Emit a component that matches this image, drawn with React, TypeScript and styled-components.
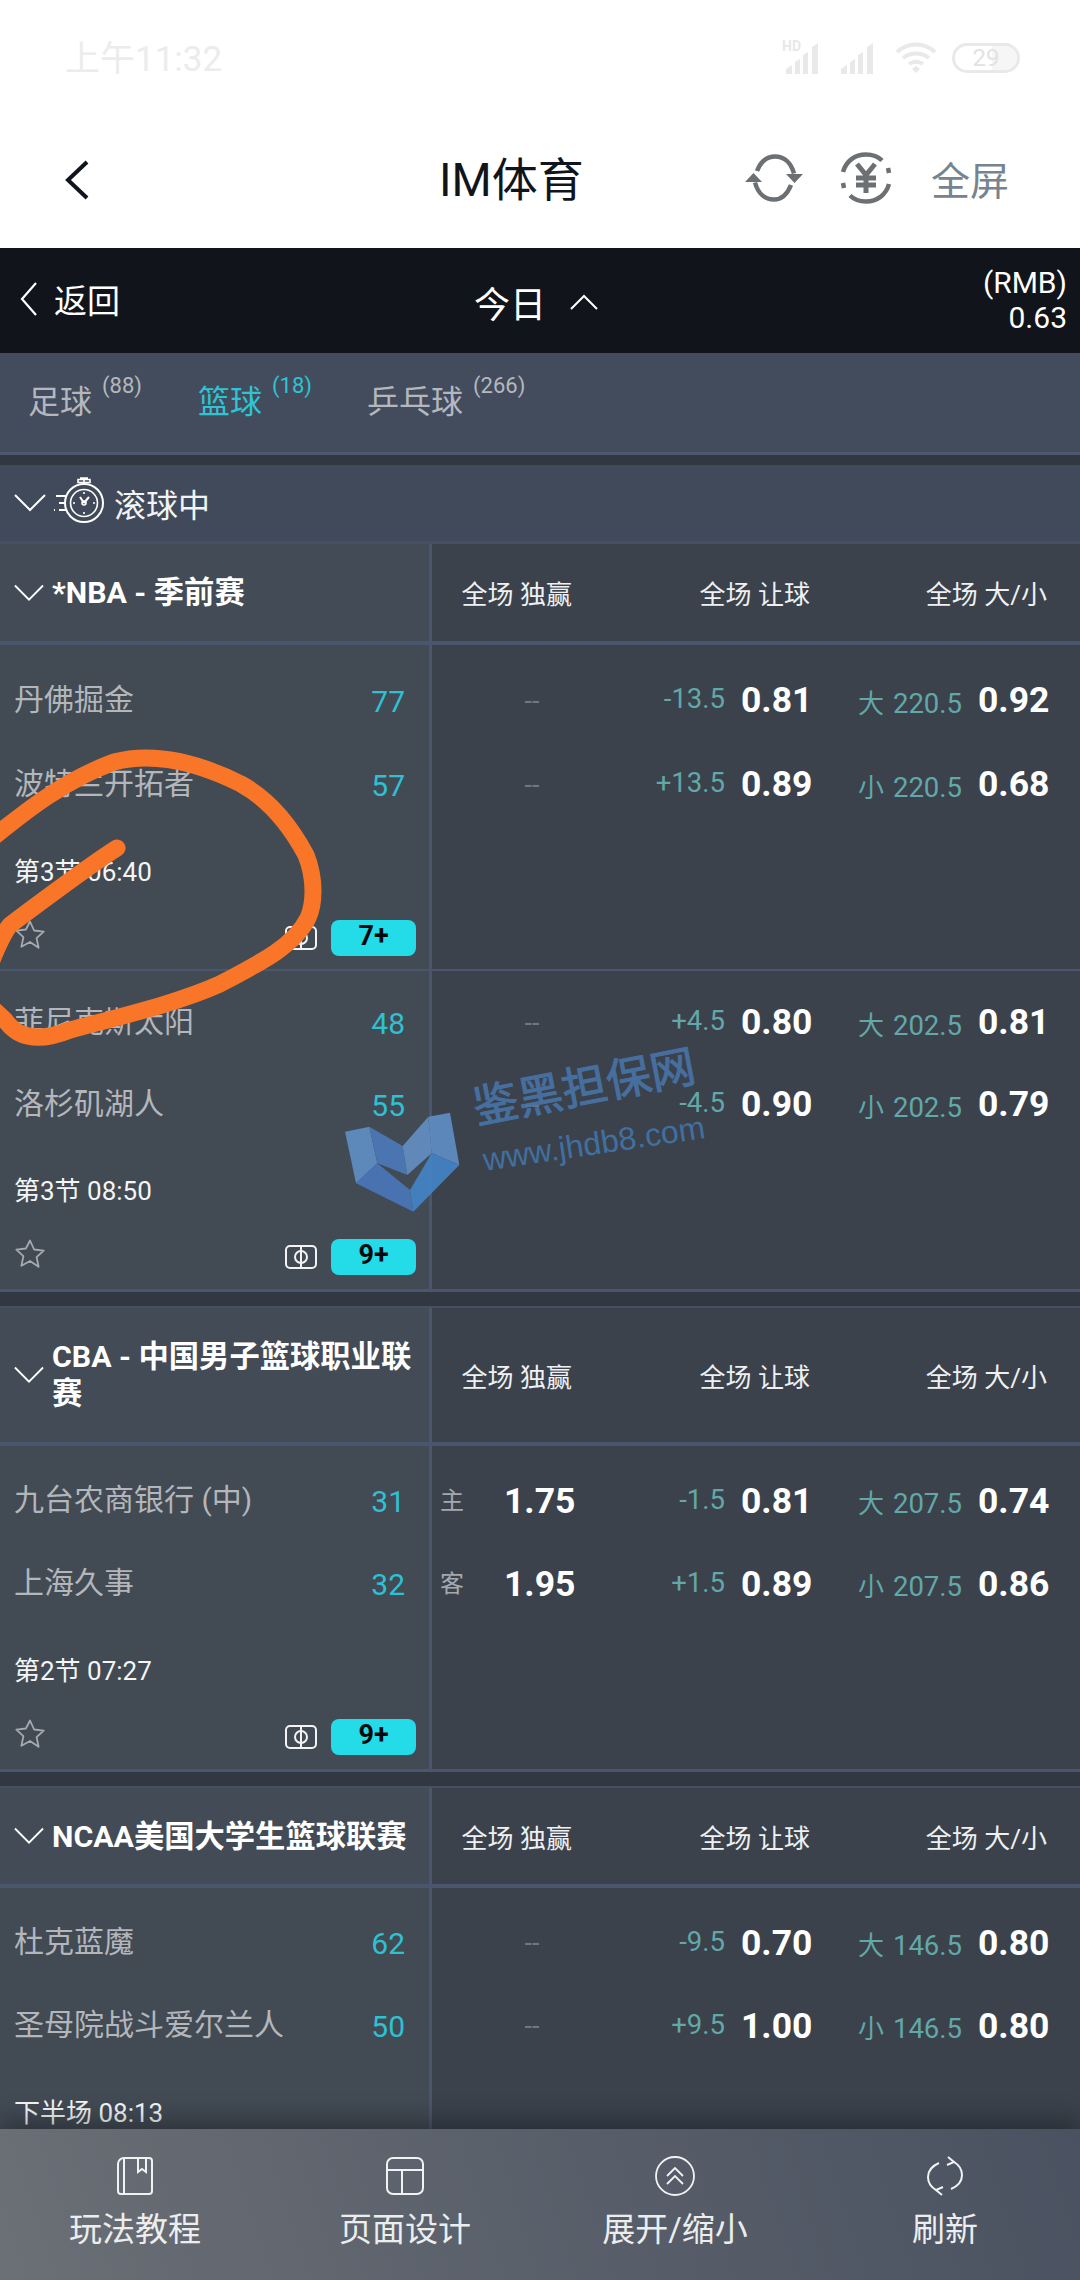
import React from "react";
import styled, { createGlobalStyle } from "styled-components";

const Global = createGlobalStyle`
  html, body { margin: 0; padding: 0; background: #3b424c; }
  * { box-sizing: border-box; }
  body { font-family: Roboto, "Noto Sans CJK SC", sans-serif; }
`;

const Page = styled.div`
  position: relative;
  width: 1080px;
  height: 2280px;
  overflow: hidden;
  display: flex;
  flex-direction: column;
  background: #3b424c;
`;

const StatusBar = styled.div`
  height: 112px;
  flex: none;
  background: #fff;
  display: flex;
  align-items: flex-start;
  padding: 39px 60px 0 65px;
  color: #ececec;
  font-size: 35px;
  line-height: 42px;
`;
const StatusIcons = styled.div`
  margin-left: auto;
  display: flex;
  gap: 15px;
  align-items: center;
  height: 32px;
  margin-top: 3px;
`;
const SignalWrap = styled.div`
  position: relative;
  display: flex;
`;
const HdMark = styled.span`
  position: absolute;
  left: -3px;
  top: -3px;
  font-size: 14px;
  line-height: 14px;
  font-weight: 700;
  color: #e8e8e8;
`;
const Battery = styled.div`
  width: 68px;
  height: 30px;
  border: 3px solid #e9e9e9;
  border-radius: 15px;
  display: flex;
  align-items: center;
  justify-content: center;
  font-size: 24px;
  color: #e2e2e2;
  background: linear-gradient(90deg, #fff 60%, #f6f6f6 60%);
`;

const NavBar = styled.div`
  height: 136px;
  flex: none;
  background: #fff;
  display: flex;
  align-items: center;
  padding: 0 71px 0 64px;
`;
const NavBack = styled.svg`
  width: 26px;
  height: 40px;
  margin-right: 349px;
`;
const NavTitle = styled.div`
  font-size: 46px;
  line-height: 60px;
  color: #10151c;
`;
const NavActions = styled.div`
  margin-left: auto;
  display: flex;
  align-items: center;
  margin-top: -4px;
`;
const FullScreen = styled.span`
  font-size: 39px;
  color: #75848f;
  margin-left: 39px;
`;
const NavIconGap = styled.div`
  width: 36px;
`;

const BlackBar = styled.div`
  height: 105px;
  flex: none;
  background: #11141a;
  color: #fff;
  display: flex;
  align-items: center;
  padding: 0 13px 0 20px;
`;
const BackLink = styled.div`
  width: 454px;
  display: flex;
  align-items: center;
  gap: 16px;
  font-size: 33px;
  margin-top: -4px;
`;
const Today = styled.div`
  display: flex;
  align-items: center;
  gap: 24px;
  font-size: 36px;
  margin-top: 2px;
`;
const Balance = styled.div`
  margin-left: auto;
  text-align: right;
  font-size: 30px;
  line-height: 35px;
  margin-top: -2px;
`;

const Tabs = styled.div`
  height: 102px;
  flex: none;
  background: #434c5c;
  border-bottom: 3px solid #4c5870;
  display: flex;
  align-items: center;
  padding-left: 28px;
`;
const Tab = styled.div<{ $active?: boolean; $w: number }>`
  width: ${(p) => p.$w}px;
  display: flex;
  gap: 10px;
  font-size: 32px;
  line-height: 44px;
  margin-top: -2px;
  color: ${(p) => (p.$active ? "#2fc3d3" : "#b4b8be")};
`;
const Count = styled.span`
  font-size: 22px;
  line-height: 26px;
  margin-top: -7px;
`;

const Gap = styled.div<{ $h: number; $ruled?: boolean }>`
  height: ${(p) => p.$h}px;
  flex: none;
  background: #323842;
  border-bottom: ${(p) => (p.$ruled ? "2px solid #465064" : "none")};
`;

const LiveHeader = styled.div`
  height: 79px;
  flex: none;
  background: #404a5a;
  border-bottom: 3px solid #465064;
  display: flex;
  align-items: center;
  padding-left: 14px;
  font-size: 32px;
  color: #f2f3f4;
`;
const LiveLabel = styled.span`
  margin-left: 10px;
`;
const StopwatchIcon = styled.svg`
  margin-left: 8px;
  margin-top: -4px;
`;

const LeagueHead = styled.div<{ $h: number }>`
  display: grid;
  grid-template-columns: 432px 1fr;
  height: ${(p) => p.$h}px;
  flex: none;
  border-bottom: 4px solid #4a566e;
`;
const LeagueName = styled.div`
  background: #434b56;
  border-right: 3px solid #4a566e;
  display: flex;
  align-items: center;
  padding: 0 14px 0 14px;
  gap: 8px;
  font-size: 30.3px;
  font-weight: 700;
  line-height: 37px;
  color: #fff;
`;
const Chevron = styled.svg`
  flex: none;
`;
const MarketGrid = styled.div`
  display: grid;
  grid-template-columns: 150px 232px 239px 27px;
  background: #3b424c;
`;
const MarketLabel = styled.div<{ $pr: number }>`
  display: flex;
  align-items: center;
  justify-content: flex-end;
  padding-right: ${(p) => p.$pr}px;
  font-size: 26px;
  color: #eef0f1;
  white-space: pre;
`;

const MatchRow = styled.div<{ $h: number; $line: number }>`
  display: grid;
  grid-template-columns: 432px 1fr;
  height: ${(p) => p.$h}px;
  flex: none;
  border-bottom: ${(p) => p.$line}px solid #4a566e;
`;
const TeamCell = styled.div<{ $top: number }>`
  background: #424a54;
  border-right: 3px solid #4a566e;
  padding: ${(p) => p.$top}px 14px 0 14px;
`;
const Team = styled.div<{ $h: number }>`
  height: ${(p) => p.$h}px;
  display: flex;
  align-items: center;
  justify-content: space-between;
  padding-right: 10px;
`;
const TeamName = styled.span`
  font-size: 30px;
  color: #b3b6bb;
  margin-top: -3px;
`;
const Score = styled.span`
  font-size: 30px;
  color: #2fc0d2;
  margin-top: 6px;
`;
const Clock = styled.div`
  height: 30px;
  margin-top: 33px;
  font-size: 26px;
  line-height: 30px;
  color: #f4f5f5;
`;
const Tools = styled.div`
  margin-top: 33px;
  height: 36px;
  display: flex;
  align-items: center;
  margin-right: -1px;
`;
const StarIcon = styled.svg`
  flex: none;
  margin-top: -7px;
`;
const FieldIcon = styled.svg`
  margin-left: auto;
  margin-right: 14px;
`;
const LiveBadge = styled.div`
  width: 85px;
  height: 36px;
  border-radius: 8px;
  background: #24dbe8;
  color: #06090c;
  font-size: 27px;
  font-weight: 700;
  display: flex;
  align-items: center;
  justify-content: center;
  padding-bottom: 4px;
`;

const OddsCell = styled.div<{ $top: number }>`
  background: #3b424c;
  padding-top: ${(p) => p.$top}px;
`;
const OddsRow = styled.div<{ $h: number }>`
  display: grid;
  grid-template-columns: 150px 232px 239px 27px;
  height: ${(p) => p.$h}px;
`;
const MoneyLine = styled.div<{ $side?: boolean }>`
  display: flex;
  align-items: center;
  justify-content: ${(p) => (p.$side ? "space-between" : "center")};
  padding: ${(p) => (p.$side ? "0 8px" : "0 0 0 50px")};
`;
const SideTag = styled.span`
  font-size: 24px;
  color: #a5a9ae;
`;
const NoOdds = styled.span`
  font-size: 27px;
  color: #70777f;
  margin-top: 5px;
`;
const Price = styled.span`
  width: 70px;
  font-size: 35.5px;
  font-weight: 700;
  color: #fff;
  white-space: nowrap;
  margin-top: 4px;
`;
const OddsPair = styled.div<{ $pr: number }>`
  display: flex;
  align-items: center;
  justify-content: flex-end;
  gap: 16px;
  padding-right: ${(p) => p.$pr}px;
`;
const Handicap = styled.span`
  font-size: 27.5px;
  color: #62a8a9;
  margin-top: 1px;
`;
const Total = styled.span`
  font-size: 27.5px;
  color: #62a8a9;
  margin-top: 6px;
  white-space: nowrap;
`;
const TotalSide = styled.span`
  font-size: 26px;
  margin-right: 9px;
`;

const Scroller = styled.div`
  flex: 1;
  min-height: 0;
  overflow: hidden;
  display: flex;
  flex-direction: column;
`;

const Footer = styled.div`
  height: 151px;
  flex: none;
  position: relative;
  display: grid;
  grid-template-columns: repeat(4, 270px);
  background: linear-gradient(72deg, #6b6f76 0%, #5b616b 45%, #4a5261 100%);
  box-shadow: 0 -8px 22px rgba(10, 12, 16, 0.38);
`;
const FooterItem = styled.div`
  display: flex;
  flex-direction: column;
  align-items: center;
  padding-top: 27px;
  font-size: 33px;
  line-height: 46px;
  color: #eceded;
`;
const FooterIcon = styled.svg`
  display: block;
  margin-bottom: 11px;
`;

const Scribble = styled.svg`
  position: absolute;
  left: 0;
  top: 740px;
  pointer-events: none;
`;
const Watermark = styled.div`
  position: absolute;
  left: 330px;
  top: 1070px;
  width: 400px;
  height: 160px;
  pointer-events: none;
`;
const WatermarkLogo = styled.svg`
  position: absolute;
  left: 0;
  top: 0;
`;
const WatermarkTitle = styled.div`
  position: absolute;
  left: 144px;
  top: 14px;
  font-size: 45px;
  line-height: 50px;
  font-weight: 400;
  color: #4878ae;
  -webkit-text-stroke: 1px #4878ae;
  opacity: 0.85;
  transform: rotate(-11deg);
  transform-origin: left center;
  white-space: nowrap;
`;
const WatermarkUrl = styled.div`
  position: absolute;
  left: 153px;
  top: 72px;
  font-family: "Liberation Sans", sans-serif;
  font-size: 32px;
  line-height: 36px;
  color: #41709f;
  transform: rotate(-8.5deg);
  transform-origin: left center;
  white-space: nowrap;
`;

const Down = ({ w = 32 }: { w?: number }) => (
  <Chevron width={w} height={20} viewBox="0 0 32 20" fill="none" stroke="#fff" strokeWidth="2">
    <path d="M1 2 L16 17 L31 2" />
  </Chevron>
);

const Star = () => (
  <StarIcon width="32" height="32" viewBox="0 0 32 32" fill="none" stroke="#a6aaaf" strokeWidth="1.8" strokeLinejoin="round">
    <path d="M16 2.500l4.100 9 9.600 1.100-7.100 6.600 2 9.600L16 23l-8.600 4.800 2-9.600-7.100-6.600 9.600-1.100z" />
  </StarIcon>
);

const Field = () => (
  <FieldIcon width="32" height="24" viewBox="0 0 32 24" fill="none" stroke="#f2f3f4" strokeWidth="2">
    <rect x="1" y="1" width="30" height="22" rx="4" />
    <circle cx="16" cy="12" r="6" />
    <path d="M16 1v22" />
  </FieldIcon>
);

const Signal = () => (
  <svg width="40" height="32" viewBox="0 0 40 32" fill="#e9e9e9">
    <path d="M1 32v-5l6-4v9zM10 32V20l5-3v15zM18 32V13l5-3v22zM27 32V5l6-4v31z" />
  </svg>
);

type Odds = { hcp: string; hcpPrice: string; side: string; total: string; totalPrice: string; ml?: [string, string] };
type Match = {
  teams: [[string, string], [string, string]];
  clock: string;
  badge: string;
  rows: [Odds, Odds];
  height: number;
  top: number;
  row: number;
  line: number;
};

const league = (name: string, h: number, matches: Match[]) => ({ name, h, matches });

const o = (hcp: string, hcpPrice: string, side: string, total: string, totalPrice: string, ml?: [string, string]): Odds => ({ hcp, hcpPrice, side, total, totalPrice, ml });

const leagues = [
  league("*NBA - 季前赛", 101, [
    {
      teams: [["丹佛掘金", "77"], ["波特兰开拓者", "57"]],
      clock: "第3节 06:40",
      badge: "7+",
      rows: [o("-13.5", "0.81", "大", "220.5", "0.92"), o("+13.5", "0.89", "小", "220.5", "0.68")],
      height: 326,
      top: 11,
      row: 84,
      line: 2,
    },
    {
      teams: [["菲尼克斯太阳", "48"], ["洛杉矶湖人", "55"]],
      clock: "第3节 08:50",
      badge: "9+",
      rows: [o("+4.5", "0.80", "大", "202.5", "0.81"), o("-4.5", "0.90", "小", "202.5", "0.79")],
      height: 321,
      top: 8,
      row: 82,
      line: 3,
    },
  ]),
  league("CBA - 中国男子篮球职业联赛", 138, [
    {
      teams: [["九台农商银行 (中)", "31"], ["上海久事", "32"]],
      clock: "第2节 07:27",
      badge: "9+",
      rows: [o("-1.5", "0.81", "大", "207.5", "0.74", ["主", "1.75"]), o("+1.5", "0.89", "小", "207.5", "0.86", ["客", "1.95"])],
      height: 326,
      top: 11,
      row: 83,
      line: 3,
    },
  ]),
  league("NCAA美国大学生篮球联赛", 100, [
    {
      teams: [["杜克蓝魔", "62"], ["圣母院战斗爱尔兰人", "50"]],
      clock: "下半场 08:13",
      badge: "9+",
      rows: [o("-9.5", "0.70", "大", "146.5", "0.80"), o("+9.5", "1.00", "小", "146.5", "0.80")],
      height: 326,
      top: 11,
      row: 83,
      line: 3,
    },
  ]),
];

const MatchView = ({ m }: { m: Match }) => (
  <MatchRow $h={m.height} $line={m.line}>
    <TeamCell $top={m.top}>
      {m.teams.map(([name, score]) => (
        <Team key={name} $h={m.row}>
          <TeamName>{name}</TeamName>
          <Score>{score}</Score>
        </Team>
      ))}
      <Clock>{m.clock}</Clock>
      <Tools>
        <Star />
        <Field />
        <LiveBadge>{m.badge}</LiveBadge>
      </Tools>
    </TeamCell>
    <OddsCell $top={m.top}>
      {m.rows.map((r) => (
        <OddsRow key={r.hcp} $h={m.row}>
          {r.ml ? (
            <MoneyLine $side>
              <SideTag>{r.ml[0]}</SideTag>
              <Price>{r.ml[1]}</Price>
            </MoneyLine>
          ) : (
            <MoneyLine>
              <NoOdds>--</NoOdds>
            </MoneyLine>
          )}
          <OddsPair $pr={3}>
            <Handicap>{r.hcp}</Handicap>
            <Price>{r.hcpPrice}</Price>
          </OddsPair>
          <OddsPair $pr={5}>
            <Total>
              <TotalSide>{r.side}</TotalSide>
              {r.total}
            </Total>
            <Price>{r.totalPrice}</Price>
          </OddsPair>
          <div />
        </OddsRow>
      ))}
    </OddsCell>
  </MatchRow>
);

export default function App() {
  return (
    <Page>
      <Global />
      <StatusBar>
        上午11:32
        <StatusIcons>
          <SignalWrap>
            <HdMark>HD</HdMark>
            <Signal />
          </SignalWrap>
          <Signal />
          <svg width="42" height="34" viewBox="0 0 42 34" fill="none" stroke="#e9e9e9" strokeWidth="4">
            <path d="M2 11c11-10 27-10 38 0M8 17c8-6 18-6 26 0M14 23c4-3 10-3 14 0" />
            <path d="M21 32l-4-4 4-3 4 3z" fill="#e9e9e9" stroke="none" />
          </svg>
          <Battery>29</Battery>
        </StatusIcons>
      </StatusBar>

      <NavBar>
        <NavBack viewBox="0 0 26 40" fill="none" stroke="#10151c" strokeWidth="4">
          <path d="M23 2 L4 20 L23 38" />
        </NavBack>
        <NavTitle>IM体育</NavTitle>
        <NavActions>
          <svg width="60" height="48" viewBox="0 0 60 48" fill="none" stroke="#6d7073" strokeWidth="4.5">
            <path d="M13 17C17 7 24 2.500 31 2.500c9 0 16 6 19 17" />
            <path d="M47 31c-4 10-10 14.500-17 14.500-9 0-16-6-19-17" />
            <path d="M42 20h17l-8.500 9zM1 28h17L9.500 19z" fill="#6d7073" stroke="none" />
          </svg>
          <NavIconGap />
          <svg width="52" height="52" viewBox="0 0 52 52" fill="none" stroke="#6d7073" strokeWidth="4.5">
            <path d="M3 20C6 9 15 2.500 26 2.500c6 0 12 2 16 6M49 21l-1-5" />
            <path d="M49 32c-3 11-12 17.500-23 17.500-6 0-12-2-16-6M3 31l1 5" />
            <path d="M17 12l9 11 9-11M26 23v18M16 26h20M16 33h20" strokeWidth="5" />
          </svg>
          <FullScreen>全屏</FullScreen>
        </NavActions>
      </NavBar>

      <BlackBar>
        <BackLink>
          <svg width="18" height="34" viewBox="0 0 18 34" fill="none" stroke="#fff" strokeWidth="2.2">
            <path d="M16 1 L2 17 L16 33" />
          </svg>
          返回
        </BackLink>
        <Today>
          今日
          <svg width="28" height="16" viewBox="0 0 28 16" fill="none" stroke="#fff" strokeWidth="2">
            <path d="M1 15 L14 2 L27 15" />
          </svg>
        </Today>
        <Balance>
          (RMB)
          <br />
          0.63
        </Balance>
      </BlackBar>

      <Tabs>
        <Tab $w={170}>
          足球<Count>(88)</Count>
        </Tab>
        <Tab $active $w={169}>
          篮球<Count>(18)</Count>
        </Tab>
        <Tab $w={200}>
          乒乓球<Count>(266)</Count>
        </Tab>
      </Tabs>
      <Gap $h={10} />

      <Scroller>
        <LiveHeader>
          <Down />
          <StopwatchIcon width="50" height="50" viewBox="0 0 50 50" fill="none" stroke="#fff" strokeWidth="1.6">
            <path d="M26 2h8M30 2v6M24 3.500h12v3H24z" />
            <circle cx="30" cy="27" r="19" strokeWidth="2" />
            <circle cx="30" cy="27" r="13.500" />
            <path d="M30 27l-4-6M30 27l5-6" strokeWidth="2" />
            <circle cx="30" cy="27" r="2" />
            <path d="M30 16v2M30 36v2M19 27h2M39 27h2" />
            <path d="M2 20h10M5 27h7M0 34h1M5 34h7" strokeWidth="2" />
          </StopwatchIcon>
          <LiveLabel>滚球中</LiveLabel>
        </LiveHeader>

        {leagues.map((l, i) => (
          <React.Fragment key={l.name}>
            {i > 0 && <Gap $h={16} $ruled />}
            <LeagueHead $h={l.h}>
              <LeagueName>
                <Down w={30} />
                <span>{l.name}</span>
              </LeagueName>
              <MarketGrid>
                <MarketLabel $pr={10}>全场 独赢</MarketLabel>
                <MarketLabel $pr={4}>全场 让球</MarketLabel>
                <MarketLabel $pr={6}>全场 大/小</MarketLabel>
                <div />
              </MarketGrid>
            </LeagueHead>
            {l.matches.map((m) => (
              <MatchView key={m.clock} m={m} />
            ))}
          </React.Fragment>
        ))}
      </Scroller>

      <Footer>
        <FooterItem>
          <FooterIcon width="40" height="40" viewBox="0 0 40 40" fill="none" stroke="#f1f2f3" strokeWidth="2">
            <path d="M9 2h25a3 3 0 0 1 3 3v30a3 3 0 0 1-3 3H6a3 3 0 0 1-3-3V8a6 6 0 0 1 6-6zM9 2v36M23 2v14l4-3 4 3V2" />
          </FooterIcon>
          玩法教程
        </FooterItem>
        <FooterItem>
          <FooterIcon width="40" height="40" viewBox="0 0 40 40" fill="none" stroke="#f1f2f3" strokeWidth="2">
            <rect x="2" y="2" width="36" height="36" rx="6" />
            <path d="M2 14h36M17 14v24" />
          </FooterIcon>
          页面设计
        </FooterItem>
        <FooterItem>
          <FooterIcon width="40" height="40" viewBox="0 0 40 40" fill="none" stroke="#f1f2f3" strokeWidth="1.8">
            <circle cx="20" cy="20" r="19" />
            <path d="M12 20l8-8 8 8M12 28l8-8 8 8" />
          </FooterIcon>
          展开/缩小
        </FooterItem>
        <FooterItem>
          <FooterIcon width="40" height="40" viewBox="0 0 40 40" fill="none" stroke="#f1f2f3" strokeWidth="2">
            <path d="M14 7C7 10 3 15 3 21c0 5 3 10 8 13" />
            <path d="M26 33c7-3 11-8 11-14 0-5-3-10-8-13" />
            <path d="M23 1l6 5-7 3M17 39l-6-5 7-3" />
          </FooterIcon>
          刷新
        </FooterItem>
      </Footer>

      <Watermark>
        <WatermarkLogo width="130" height="160" viewBox="0 0 390 480">
          <g opacity="0.9">
            <polygon points="45,185 118,170 142,280 78,340" fill="#5f8fc6" />
            <polygon points="118,170 218,228 232,315 142,280" fill="#4b7abb" />
            <polygon points="218,228 295,140 305,250 232,315" fill="#6490c4" />
            <polygon points="295,140 360,128 388,285 305,250" fill="#5f8fc6" />
            <polygon points="78,340 142,280 240,360 250,425" fill="#4a78bb" />
            <polygon points="240,360 305,250 388,285 250,425" fill="#4385c8" />
          </g>
        </WatermarkLogo>
        <WatermarkTitle>鉴黑担保网</WatermarkTitle>
        <WatermarkUrl>www.jhdb8.com</WatermarkUrl>
      </Watermark>

      <Scribble width="330" height="320" viewBox="0 0 330 320" fill="none" stroke="#f97628" strokeWidth="17" strokeLinecap="round" strokeLinejoin="round">
        <path d="M-10 100 C20 76 60 42 114 22 C145 14 185 16 241 44 C270 60 290 85 306 115 C316 140 314 165 308 178 C295 205 262 222 220 244 C180 262 130 274 70 290 C45 300 20 302 5 280 L-10 266" />
        <path d="M117 108 C90 125 50 155 10 185 C2 195 -4 210 -10 225" />
      </Scribble>
    </Page>
  );
}
